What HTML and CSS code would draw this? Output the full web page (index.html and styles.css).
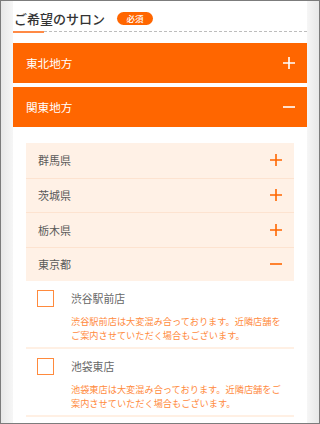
FILE: index.html
```html
<!DOCTYPE html>
<html lang="ja">
<head>
<meta charset="utf-8">
<title>ご希望のサロン</title>
<link rel="stylesheet" href="styles.css">
</head>
<body>
<div class="frame">
  <div class="card">
    <div class="title">
      <h2 class="title-text">ご希望のサロン</h2>
      <span class="badge">必須</span>
    </div>
    <div class="rule"><span class="rule-accent"></span><span class="rule-rest"></span></div>

    <div class="region">
      <span class="region-name">東北地方</span>
      <svg class="icon" viewBox="0 0 12 12" width="12" height="12"><path d="M6 0V12M0 6H12" stroke="#fff" stroke-width="1.6" fill="none"/></svg>
    </div>
    <div class="region">
      <span class="region-name">関東地方</span>
      <svg class="icon" viewBox="0 0 12 12" width="12" height="12"><path d="M0 6H12" stroke="#fff" stroke-width="1.6" fill="none"/></svg>
    </div>

    <div class="region-body">
      <ul class="prefs">
        <li class="pref"><span>群馬県</span><svg class="icon" viewBox="0 0 12 12" width="12" height="12"><path d="M6 0V12M0 6H12" stroke="#ff6600" stroke-width="1.6" fill="none"/></svg></li>
        <li class="pref"><span>茨城県</span><svg class="icon" viewBox="0 0 12 12" width="12" height="12"><path d="M6 0V12M0 6H12" stroke="#ff6600" stroke-width="1.6" fill="none"/></svg></li>
        <li class="pref"><span>栃木県</span><svg class="icon" viewBox="0 0 12 12" width="12" height="12"><path d="M6 0V12M0 6H12" stroke="#ff6600" stroke-width="1.6" fill="none"/></svg></li>
        <li class="pref"><span>東京都</span><svg class="icon" viewBox="0 0 12 12" width="12" height="12"><path d="M0 6H12" stroke="#ff6600" stroke-width="1.6" fill="none"/></svg></li>
      </ul>
      <ul class="shops">
        <li class="shop">
          <span class="check"></span>
          <span class="shop-name">渋谷駅前店</span>
          <p class="shop-note">渋谷駅前店は大変混み合っております。近隣店舗をご案内させていただく場合もございます。</p>
        </li>
        <li class="shop">
          <span class="check"></span>
          <span class="shop-name">池袋東店</span>
          <p class="shop-note">池袋東店は大変混み合っております。近隣店舗をご案内させていただく場合もございます。</p>
        </li>
      </ul>
    </div>
  </div>
</div>
</body>
</html>
```

FILE: styles.css
```css
* { box-sizing: border-box; }
html, body { margin: 0; padding: 0; }
body {
  font-family: "Noto Sans CJK JP", "Noto Sans", sans-serif;
  background: #fff;
}
.frame {
  width: 320px;
  height: 424px;
  border: 1px solid #7c7c7c;
  overflow: hidden;
  padding: 0 12px;
  background: linear-gradient(90deg, #e8e8e8 0, #f6f6f6 12px, #f6f6f6 calc(100% - 12px), #e8e8e8 100%);
}
.card {
  background: #fff;
  min-height: 100%;
}
.title {
  display: flex;
  align-items: center;
  height: 30px;
  padding: 4px 0 0 1px;
}
.title-text {
  margin: 0;
  font-size: 13px;
  font-weight: 500;
  color: #333;
  line-height: 1;
}
.badge {
  margin-left: 12px;
  width: 36px;
  height: 13px;
  border-radius: 7px;
  background: #ff6600;
  color: #fff;
  font-size: 8.5px;
  line-height: 13px;
  text-align: center;
  font-weight: 500;
}
.rule {
  display: flex;
  height: 1px;
  margin-bottom: 11px;
}
.rule-accent {
  width: 31px;
  background: #ff8a45;
  height: 1.5px;
}
.rule-rest {
  flex: 1;
  border-top: 1px dashed #bdbdbd;
}
.region {
  display: flex;
  align-items: center;
  justify-content: space-between;
  height: 40px;
  margin-bottom: 4px;
  padding: 0 12px 0 13px;
  background: #ff6600;
  color: #fff;
  font-size: 11.6px;
}
.region:last-of-type { margin-bottom: 0; }
.icon { display: block; flex: none; }
.region-body {
  padding: 12px 13px 0;
}
.prefs, .shops {
  list-style: none;
  margin: 0;
  padding: 0;
}
.prefs { background: #fff1e6; }
.pref {
  display: flex;
  align-items: center;
  justify-content: space-between;
  height: 34.5px;
  padding: 0 12px;
  font-size: 11px;
  color: #5a5a5a;
}
.pref + .pref { border-top: 1px solid #fde3d0; }
.shop {
  display: grid;
  grid-template-columns: 17px 1fr;
  column-gap: 17px;
  padding: 8.5px 6px 5px 11px;
  border-bottom: 2px solid #fff0e4;
}
.check {
  width: 17px;
  height: 17px;
  border: 1.5px solid #ff8a3d;
  background: #fff;
}
.shop-name {
  font-size: 10.8px;
  line-height: 17px;
  color: #666;
}
.shop-note {
  grid-column: 2;
  margin: 8.5px 0 0;
  font-size: 9.2px;
  line-height: 13.5px;
  color: #ff8a3d;
}
```
